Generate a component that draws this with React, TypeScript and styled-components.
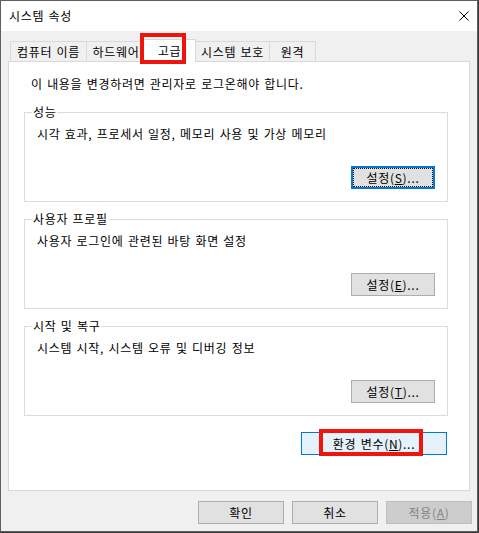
import styled, { createGlobalStyle } from "styled-components";

const GlobalStyle = createGlobalStyle`
  html, body {
    margin: 0;
    padding: 0;
  }
  body {
    background: #3a3a3a;
    font-family: "Noto Sans CJK KR", "Noto Sans", sans-serif;
    font-size: 12px;
    line-height: 16px;
    letter-spacing: 0.7px;
    word-spacing: 1px;
    color: #000;
  }
`;

const Window = styled.div`
  box-sizing: border-box;
  width: 478px;
  height: 532px;
  border: 1px solid #5f5f5f;
  background: #f0f0f0;
  display: flex;
  flex-direction: column;
`;

const TitleBar = styled.div`
  flex: none;
  height: 30px;
  background: #fff;
  display: flex;
  align-items: center;
  padding: 0 8px;
`;

const Title = styled.span`
  white-space: nowrap;
`;

const CloseIcon = styled.svg`
  margin-left: auto;
  display: block;
`;

const Body = styled.div`
  flex: 1;
  display: flex;
  flex-direction: column;
  padding: 8px 7px 7px;
`;

const TabStrip = styled.div`
  flex: none;
  height: 22px;
  display: flex;
  align-items: flex-end;
  padding-left: 2px;
`;

const Tab = styled.div<{ $width: number; $active?: boolean; $marked?: boolean }>`
  position: relative;
  z-index: ${(p) => (p.$active ? 2 : 1)};
  box-sizing: border-box;
  width: ${(p) => p.$width}px;
  height: ${(p) => (p.$active ? 23 : 20)}px;
  margin: 0 -1px ${(p) => (p.$active ? -1 : 0)}px
    ${(p) => (p.$active ? -2 : 0)}px;
  padding-bottom: ${(p) => (p.$active ? 1 : 0)}px;
  border: 1px solid #d9d9d9;
  border-bottom: none;
  background: ${(p) => (p.$active ? "#fff" : "#f0f0f0")};
  display: flex;
  align-items: center;
  justify-content: center;
  white-space: nowrap;

  ${(p) =>
    p.$marked &&
    `
    &::after {
      content: "";
      position: absolute;
      left: -4px;
      top: -7px;
      width: 46px;
      height: 31px;
      box-sizing: border-box;
      border: 4px solid #f0150c;
      pointer-events: none;
    }
  `}
`;

const Panel = styled.div`
  flex: none;
  box-sizing: border-box;
  height: 430px;
  background: #fff;
  border: 1px solid #d9d9d9;
  padding: 14px 21px 0 15px;
  display: flex;
  flex-direction: column;
`;

const Notice = styled.div`
  margin-left: 7px;
  white-space: nowrap;
`;

const GroupList = styled.div`
  margin-top: 20px;
  display: flex;
  flex-direction: column;
  gap: 17px;
`;

const Group = styled.div`
  position: relative;
  box-sizing: border-box;
  height: 90px;
  border: 1px solid #dcdcdc;
  padding: 13px 12px 12px;
  display: flex;
  flex-direction: column;
`;

const Legend = styled.span`
  position: absolute;
  left: 7px;
  top: -9px;
  padding: 0 1px;
  background: #fff;
  white-space: nowrap;
`;

const Description = styled.div`
  white-space: nowrap;
`;

const Button = styled.button<{
  $width: number;
  $variant?: "focused" | "hot" | "disabled";
  $marked?: boolean;
}>`
  position: relative;
  overflow: visible;
  box-sizing: border-box;
  flex: none;
  width: ${(p) => p.$width}px;
  height: 23px;
  padding: 0;
  font-family: inherit;
  font-size: 12px;
  line-height: 16px;
  letter-spacing: 0.7px;
  word-spacing: 1px;
  color: ${(p) => (p.$variant === "disabled" ? "#838383" : "#000")};
  background: ${(p) =>
    p.$variant === "hot"
      ? "#e5f1fb"
      : p.$variant === "disabled"
      ? "#cccccc"
      : "#e1e1e1"};
  border: ${(p) =>
    p.$variant === "focused"
      ? "2px solid #0078d7"
      : p.$variant === "hot"
      ? "1px solid #0078d7"
      : p.$variant === "disabled"
      ? "1px solid #bfbfbf"
      : "1px solid #adadad"};
  white-space: nowrap;

  ${(p) =>
    p.$variant === "focused" &&
    `
    &::before {
      content: "";
      position: absolute;
      inset: 0;
      border: 1px dotted #000;
      pointer-events: none;
    }
  `}

  ${(p) =>
    p.$marked &&
    `
    &::after {
      content: "";
      position: absolute;
      left: 17px;
      top: -4px;
      width: 104px;
      height: 27px;
      box-sizing: border-box;
      border: 4px solid #f0150c;
      pointer-events: none;
    }
  `}
`;

const GroupButton = styled(Button)`
  margin-top: auto;
  align-self: flex-end;
`;

const EnvButton = styled(Button)`
  margin-top: 16px;
  margin-right: 1px;
  align-self: flex-end;
`;

const Footer = styled.div`
  flex: none;
  margin-top: 10px;
  margin-right: -2px;
  display: flex;
  justify-content: flex-end;
  gap: 8px;
`;

const tabs = [
  { label: "컴퓨터 이름", width: 77 },
  { label: "하드웨어", width: 60 },
  { label: "고급", width: 53, active: true },
  { label: "시스템 보호", width: 75 },
  { label: "원격", width: 47 },
];

const groups = [
  {
    title: "성능",
    text: "시각 효과, 프로세서 일정, 메모리 사용 및 가상 메모리",
    key: "S",
    focused: true,
  },
  {
    title: "사용자 프로필",
    text: "사용자 로그인에 관련된 바탕 화면 설정",
    key: "E",
  },
  {
    title: "시작 및 복구",
    text: "시스템 시작, 시스템 오류 및 디버깅 정보",
    key: "T",
  },
];

export default function App() {
  return (
    <>
      <GlobalStyle />
      <Window>
        <TitleBar>
          <Title>시스템 속성</Title>
          <CloseIcon width="10" height="10" viewBox="0 0 10 10">
            <path
              d="M0.5 0.5 L9.5 9.5 M9.5 0.5 L0.5 9.5"
              stroke="#000"
              strokeWidth="1"
              fill="none"
            />
          </CloseIcon>
        </TitleBar>
        <Body>
          <TabStrip>
            {tabs.map((t) => (
              <Tab
                key={t.label}
                $width={t.width}
                $active={t.active}
                $marked={t.active}
              >
                {t.label}
              </Tab>
            ))}
          </TabStrip>
          <Panel>
            <Notice>이 내용을 변경하려면 관리자로 로그온해야 합니다.</Notice>
            <GroupList>
              {groups.map((g) => (
                <Group key={g.title}>
                  <Legend>{g.title}</Legend>
                  <Description>{g.text}</Description>
                  <GroupButton
                    $width={84}
                    $variant={g.focused ? "focused" : undefined}
                  >
                    설정(<u>{g.key}</u>)...
                  </GroupButton>
                </Group>
              ))}
            </GroupList>
            <EnvButton $width={146} $variant="hot" $marked>
              환경 변수(<u>N</u>)...
            </EnvButton>
          </Panel>
          <Footer>
            <Button $width={86}>확인</Button>
            <Button $width={86}>취소</Button>
            <Button $width={86} $variant="disabled" disabled>
              적용(<u>A</u>)
            </Button>
          </Footer>
        </Body>
      </Window>
    </>
  );
}
